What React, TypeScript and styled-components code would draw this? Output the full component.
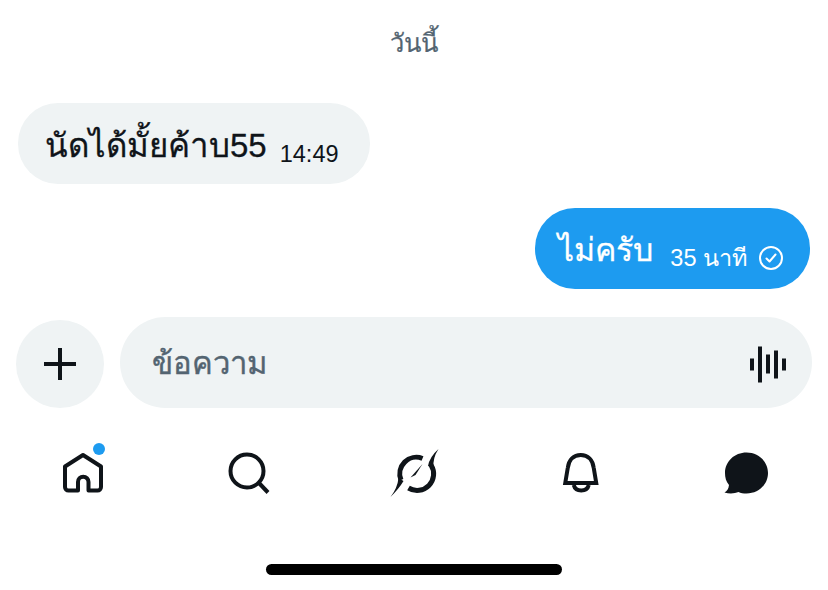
import React from 'react';
import styled, { createGlobalStyle } from 'styled-components';

const GlobalStyle = createGlobalStyle`
    html, body {
        margin: 0;
        padding: 0;
        background: #fff;
        font-family: "Liberation Sans", "Noto Sans", sans-serif;
    }
`;

const Screen = styled.div`
    width: 828px;
    height: 590px;
    overflow: hidden;
    display: flex;
    flex-direction: column;
    background: #fff;
`;

const DateLabel = styled.div`
    height: 103px;
    padding-top: 25px;
    box-sizing: border-box;
    text-align: center;
    font-size: 25.5px;
    line-height: 36px;
    color: #536471;
    -webkit-text-stroke: 0.2px #536471;
`;

const MessageRow = styled.div<{ $mine?: boolean }>`
    display: flex;
    justify-content: ${(p) => (p.$mine ? 'flex-end' : 'flex-start')};
    padding: ${(p) => (p.$mine ? '0 18px 0 0' : '0 0 0 18px')};
    margin-bottom: ${(p) => (p.$mine ? '28px' : '24px')};
`;

const Bubble = styled.div<{ $mine?: boolean }>`
    height: 81px;
    box-sizing: border-box;
    border-radius: 40px;
    display: flex;
    align-items: center;
    padding: ${(p) => (p.$mine ? '0 26px 0 23px' : '0 31px 0 27px')};
    background: ${(p) => (p.$mine ? '#1d9bf0' : '#eff3f4')};
    color: ${(p) => (p.$mine ? '#fff' : '#0f1419')};
`;

const MessageText = styled.span<{ $mine?: boolean }>`
    font-size: ${(p) => (p.$mine ? '32px' : '33px')};
    line-height: 40px;
    padding-top: ${(p) => (p.$mine ? '3px' : '5px')};
    -webkit-text-stroke: 0.3px currentColor;
`;

const MessageMeta = styled.span<{ $mine?: boolean }>`
    display: flex;
    align-items: center;
    gap: 11px;
    margin: ${(p) => (p.$mine ? '18px 0 0 17.5px' : '20px 0 0 13px')};
    font-size: 23.5px;
    line-height: 28px;
`;

const Composer = styled.div`
    display: flex;
    align-items: flex-end;
    gap: 16px;
    padding: 0 16px;
`;

const AddButton = styled.button`
    width: 88px;
    height: 88px;
    padding: 0;
    border: none;
    border-radius: 50%;
    background: #eff3f4;
    display: flex;
    align-items: center;
    justify-content: center;
    color: #0f1419;
`;

const InputBox = styled.div`
    flex: 1;
    height: 91px;
    box-sizing: border-box;
    padding: 0 26px 0 32px;
    border-radius: 46px;
    background: #eff3f4;
    display: flex;
    align-items: center;
    justify-content: space-between;
`;

const Placeholder = styled.span`
    font-size: 31px;
    line-height: 40px;
    padding-top: 3px;
    color: #536471;
    -webkit-text-stroke: 0.4px #536471;
`;

const NavBar = styled.nav`
    display: flex;
    justify-content: space-between;
    align-items: center;
    height: 130px;
    padding: 0 59px 0 60px;
`;

const NavItem = styled.div`
    position: relative;
    width: 46px;
    height: 50px;
    display: flex;
    align-items: center;
    justify-content: center;

    svg {
        flex-shrink: 0;
    }
`;

const NavDot = styled.span`
    position: absolute;
    top: -5px;
    right: 1px;
    width: 12px;
    height: 12px;
    border-radius: 50%;
    background: #1d9bf0;
`;

const HomeBar = styled.div`
    align-self: center;
    width: 296px;
    height: 11px;
    margin-top: 26px;
    border-radius: 6px;
    background: #000;
`;

const CheckIcon = () => (
    <svg width="26" height="26" viewBox="0 0 26 26" fill="none" stroke="currentColor" strokeWidth="2">
        <circle cx="13" cy="13" r="11" />
        <path d="M8.5 13.5l3 3 6-7" strokeLinecap="round" strokeLinejoin="round" />
    </svg>
);

const PlusIcon = () => (
    <svg width="34" height="34" viewBox="0 0 34 34" fill="none" stroke="currentColor" strokeWidth="4">
        <path d="M17 1v32M1 17h32" />
    </svg>
);

const WaveIcon = () => (
    <svg width="38" height="40" viewBox="0 0 38 40" fill="none" stroke="#0f1419" strokeWidth="4">
        <path d="M4 15.500v12M12 3.500v36M20 11.500v19M28 7.500v28M36 15.500v12" />
    </svg>
);

const HomeIcon = () => (
    <svg width="42" height="42" viewBox="0 0 42 42" fill="none" stroke="#0f1419" strokeWidth="4" strokeLinejoin="round">
        <path d="M21 3L39 14.500V35a3.500 3.500 0 0 1-3.500 3.500H26.500V30a5.250 5.250 0 0 0-10.500 0V38.500H6.500A3.500 3.500 0 0 1 3 35V14.500z" />
    </svg>
);

const SearchIcon = () => (
    <svg width="42" height="42" viewBox="0 0 42 42" fill="none" stroke="#0f1419" strokeWidth="4">
        <circle cx="19" cy="19" r="16.500" />
        <path d="M30.500 30.500L40 40.500" />
    </svg>
);

const ExploreIcon = () => (
    <svg width="60" height="60" viewBox="-0.5 -1 60 60">
        <g fill="none" stroke="#0f1419" strokeWidth="5">
            <path d="M37 14.500A16.500 16.500 0 0 0 15.500 36" />
            <path d="M23 44A16.500 16.500 0 0 0 45.500 21" />
        </g>
        <g fill="#0f1419">
            <path d="M5 53Q12 44 13 34L18 37Q14 44 5 53z" />
            <path d="M53 5Q44 13 42.500 22L48 24Q47 14 53 5z" />
            <path d="M25 33.500L37 20 30 31z" />
        </g>
    </svg>
);

const BellIcon = () => (
    <svg width="38" height="42" viewBox="-0.75 0 38 42" fill="none" stroke="#0f1419" strokeWidth="4">
        <path d="M3.500 31L6 16C7 8 12 3 19 3S31 8 32 16L34.500 31z" />
        <path d="M12 33C13 37 16 38.500 19.500 38.500S26 37 27 33" />
    </svg>
);

const ChatIcon = () => (
    <svg width="46" height="42" viewBox="0.5 0 46 42">
        <path
            fill="#0f1419"
            d="M24 0.500c12 0 21.500 9 21.500 20.500S36 41.500 24 41.500c-3 0-6-0.500-8-1.500-3.500 1.500-9 2-14 0.500 2.500-1.500 4-3.500 4.500-7.500C3.500 29.500 2.500 25.500 2.500 21 2.500 9.500 12 0.500 24 0.500z"
        />
    </svg>
);

const App = () => (
    <Screen>
        <GlobalStyle />
        <DateLabel>วันนี้</DateLabel>
        <MessageRow>
            <Bubble>
                <MessageText>นัดได้มั้ยค้าบ55</MessageText>
                <MessageMeta>14:49</MessageMeta>
            </Bubble>
        </MessageRow>
        <MessageRow $mine>
            <Bubble $mine>
                <MessageText $mine>ไม่ครับ</MessageText>
                <MessageMeta $mine>
                    35 นาที
                    <CheckIcon />
                </MessageMeta>
            </Bubble>
        </MessageRow>
        <Composer>
            <AddButton>
                <PlusIcon />
            </AddButton>
            <InputBox>
                <Placeholder>ข้อความ</Placeholder>
                <WaveIcon />
            </InputBox>
        </Composer>
        <NavBar>
            <NavItem>
                <HomeIcon />
                <NavDot />
            </NavItem>
            <NavItem>
                <SearchIcon />
            </NavItem>
            <NavItem>
                <ExploreIcon />
            </NavItem>
            <NavItem>
                <BellIcon />
            </NavItem>
            <NavItem>
                <ChatIcon />
            </NavItem>
        </NavBar>
        <HomeBar />
    </Screen>
);

export default App;
